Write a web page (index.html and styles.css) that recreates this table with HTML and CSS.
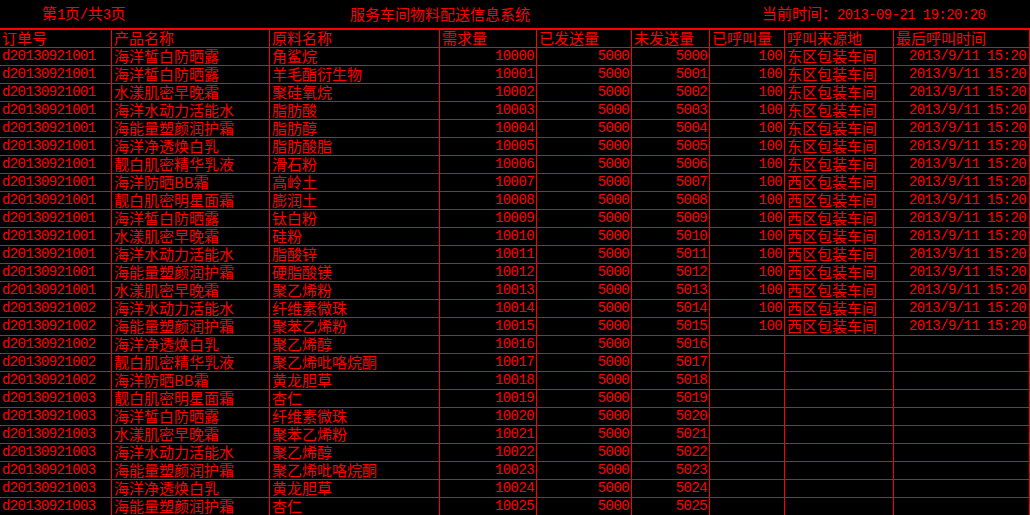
FILE: index.html
```html
<!DOCTYPE html>
<html lang="zh-CN">
<head>
<meta charset="utf-8">
<title>服务车间物料配送信息系统</title>
<link rel="stylesheet" href="styles.css">
</head>
<body>
<div class="screen">
  <div class="topbar">
    <div class="page-info">第<span class="m">1</span>页<span class="m">/</span>共<span class="m">3</span>页</div>
    <div class="sys-title">服务车间物料配送信息系统</div>
    <div class="clock">当前时间：<span class="m">2013-09-21 19:20:20</span></div>
  </div>
  <div class="grid">
    <div class="h">订单号</div><div class="h">产品名称</div><div class="h">原料名称</div><div class="h">需求量</div><div class="h">已发送量</div><div class="h">未发送量</div><div class="h">已呼叫量</div><div class="h">呼叫来源地</div><div class="h">最后呼叫时间</div>

    <div class="m">d20130921001</div><div>海洋皙白防晒露</div><div>角鲨烷</div><div class="m r">10000</div><div class="m r">5000</div><div class="m r">5000</div><div class="m r">100</div><div>东区包装车间</div><div class="m r d">2013/9/11 15:20</div>
    <div class="m">d20130921001</div><div>海洋皙白防晒露</div><div>羊毛酯衍生物</div><div class="m r">10001</div><div class="m r">5000</div><div class="m r">5001</div><div class="m r">100</div><div>东区包装车间</div><div class="m r d">2013/9/11 15:20</div>
    <div class="m">d20130921001</div><div>水漾肌密早晚霜</div><div>聚硅氧烷</div><div class="m r">10002</div><div class="m r">5000</div><div class="m r">5002</div><div class="m r">100</div><div>东区包装车间</div><div class="m r d">2013/9/11 15:20</div>
    <div class="m">d20130921001</div><div>海洋水动力活能水</div><div>脂肪酸</div><div class="m r">10003</div><div class="m r">5000</div><div class="m r">5003</div><div class="m r">100</div><div>东区包装车间</div><div class="m r d">2013/9/11 15:20</div>
    <div class="m">d20130921001</div><div>海能量塑颜润护霜</div><div>脂肪醇</div><div class="m r">10004</div><div class="m r">5000</div><div class="m r">5004</div><div class="m r">100</div><div>东区包装车间</div><div class="m r d">2013/9/11 15:20</div>
    <div class="m">d20130921001</div><div>海洋净透焕白乳</div><div>脂肪酸脂</div><div class="m r">10005</div><div class="m r">5000</div><div class="m r">5005</div><div class="m r">100</div><div>东区包装车间</div><div class="m r d">2013/9/11 15:20</div>
    <div class="m">d20130921001</div><div>靓白肌密精华乳液</div><div>滑石粉</div><div class="m r">10006</div><div class="m r">5000</div><div class="m r">5006</div><div class="m r">100</div><div>东区包装车间</div><div class="m r d">2013/9/11 15:20</div>
    <div class="m">d20130921001</div><div>海洋防晒BB霜</div><div>高岭土</div><div class="m r">10007</div><div class="m r">5000</div><div class="m r">5007</div><div class="m r">100</div><div>西区包装车间</div><div class="m r d">2013/9/11 15:20</div>
    <div class="m">d20130921001</div><div>靓白肌密明星面霜</div><div>膨润土</div><div class="m r">10008</div><div class="m r">5000</div><div class="m r">5008</div><div class="m r">100</div><div>西区包装车间</div><div class="m r d">2013/9/11 15:20</div>
    <div class="m">d20130921001</div><div>海洋皙白防晒露</div><div>钛白粉</div><div class="m r">10009</div><div class="m r">5000</div><div class="m r">5009</div><div class="m r">100</div><div>西区包装车间</div><div class="m r d">2013/9/11 15:20</div>
    <div class="m">d20130921001</div><div>水漾肌密早晚霜</div><div>硅粉</div><div class="m r">10010</div><div class="m r">5000</div><div class="m r">5010</div><div class="m r">100</div><div>西区包装车间</div><div class="m r d">2013/9/11 15:20</div>
    <div class="m">d20130921001</div><div>海洋水动力活能水</div><div>脂酸锌</div><div class="m r">10011</div><div class="m r">5000</div><div class="m r">5011</div><div class="m r">100</div><div>西区包装车间</div><div class="m r d">2013/9/11 15:20</div>
    <div class="m">d20130921001</div><div>海能量塑颜润护霜</div><div>硬脂酸镁</div><div class="m r">10012</div><div class="m r">5000</div><div class="m r">5012</div><div class="m r">100</div><div>西区包装车间</div><div class="m r d">2013/9/11 15:20</div>
    <div class="m">d20130921001</div><div>水漾肌密早晚霜</div><div>聚乙烯粉</div><div class="m r">10013</div><div class="m r">5000</div><div class="m r">5013</div><div class="m r">100</div><div>西区包装车间</div><div class="m r d">2013/9/11 15:20</div>
    <div class="m">d20130921002</div><div>海洋水动力活能水</div><div>纤维素微珠</div><div class="m r">10014</div><div class="m r">5000</div><div class="m r">5014</div><div class="m r">100</div><div>西区包装车间</div><div class="m r d">2013/9/11 15:20</div>
    <div class="m">d20130921002</div><div>海能量塑颜润护霜</div><div>聚苯乙烯粉</div><div class="m r">10015</div><div class="m r">5000</div><div class="m r">5015</div><div class="m r">100</div><div>西区包装车间</div><div class="m r d">2013/9/11 15:20</div>
    <div class="m">d20130921002</div><div>海洋净透焕白乳</div><div>聚乙烯醇</div><div class="m r">10016</div><div class="m r">5000</div><div class="m r">5016</div><div></div><div></div><div></div>
    <div class="m">d20130921002</div><div>靓白肌密精华乳液</div><div>聚乙烯吡咯烷酮</div><div class="m r">10017</div><div class="m r">5000</div><div class="m r">5017</div><div></div><div></div><div></div>
    <div class="m">d20130921002</div><div>海洋防晒BB霜</div><div>黄龙胆草</div><div class="m r">10018</div><div class="m r">5000</div><div class="m r">5018</div><div></div><div></div><div></div>
    <div class="m">d20130921003</div><div>靓白肌密明星面霜</div><div>杏仁</div><div class="m r">10019</div><div class="m r">5000</div><div class="m r">5019</div><div></div><div></div><div></div>
    <div class="m">d20130921003</div><div>海洋皙白防晒露</div><div>纤维素微珠</div><div class="m r">10020</div><div class="m r">5000</div><div class="m r">5020</div><div></div><div></div><div></div>
    <div class="m">d20130921003</div><div>水漾肌密早晚霜</div><div>聚苯乙烯粉</div><div class="m r">10021</div><div class="m r">5000</div><div class="m r">5021</div><div></div><div></div><div></div>
    <div class="m">d20130921003</div><div>海洋水动力活能水</div><div>聚乙烯醇</div><div class="m r">10022</div><div class="m r">5000</div><div class="m r">5022</div><div></div><div></div><div></div>
    <div class="m">d20130921003</div><div>海能量塑颜润护霜</div><div>聚乙烯吡咯烷酮</div><div class="m r">10023</div><div class="m r">5000</div><div class="m r">5023</div><div></div><div></div><div></div>
    <div class="m">d20130921003</div><div>海洋净透焕白乳</div><div>黄龙胆草</div><div class="m r">10024</div><div class="m r">5000</div><div class="m r">5024</div><div></div><div></div><div></div>
    <div class="m">d20130921003</div><div>海能量塑颜润护霜</div><div>杏仁</div><div class="m r">10025</div><div class="m r">5000</div><div class="m r">5025</div><div></div><div></div><div></div>
  </div>
</div>
</body>
</html>
```

FILE: styles.css
```css
html, body {
  margin: 0;
  padding: 0;
  background: #000;
}

body {
  color: #ff0000;
  font-family: "Noto Sans CJK SC", sans-serif;
  font-size: 15px;
  overflow: hidden;
}

.screen {
  width: 1030px;
  height: 515px;
  overflow: hidden;
}

.topbar {
  height: 28px;
  display: grid;
  grid-template-columns: 350px 412px 1fr;
  align-items: center;
  line-height: 20px;
  white-space: nowrap;
}

.page-info {
  padding-left: 42px;
}

.m {
  font-family: "Liberation Mono", monospace;
  font-size: 14px;
  letter-spacing: -0.6px;
}

.grid {
  display: grid;
  grid-template-columns: 111px 157px 169px 96px 94px 77px 74px 108px 135px;
  grid-auto-rows: 17px;
  gap: 1px;
  background: #ff0000;
  border-top: 2px solid #ff0000;
  border-right: 1px solid #ff0000;
  width: 1029px;
}

.grid > div {
  background: #000;
  box-sizing: border-box;
  height: 17px;
  line-height: 15px;
  padding: 0 2px 2px 2px;
  white-space: nowrap;
}

.grid > .m {
  line-height: 17px;
  padding-bottom: 0;
}

.grid > .r {
  text-align: right;
  padding-right: 2px;
}

.grid > .d {
  padding-right: 3px;
}
```
